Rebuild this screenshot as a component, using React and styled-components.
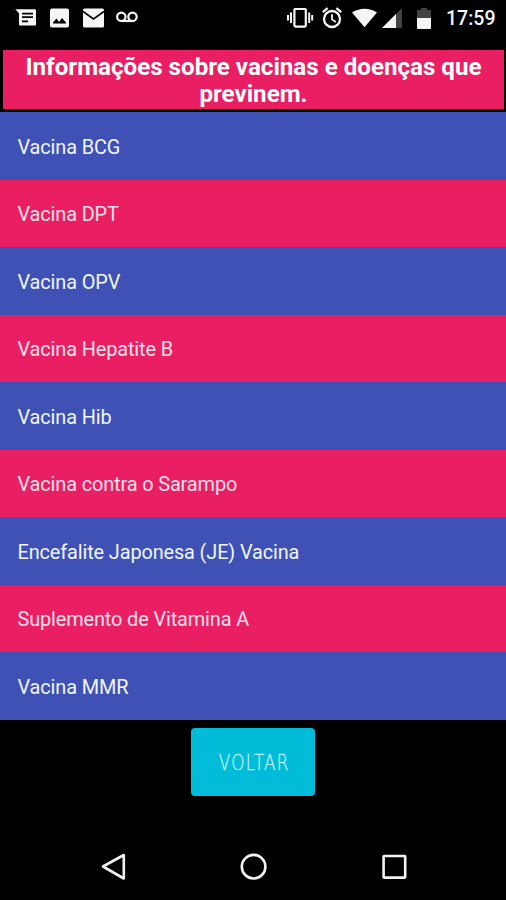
import React from 'react';
import styled, {createGlobalStyle} from 'styled-components';


const GlobalStyle = createGlobalStyle`
    *{
        box-sizing:border-box;
        margin:0;
        padding:0;
    }
    body{
        background-color:#000;
        font-family:Roboto, sans-serif;
    }
`

const Screen = styled.div`
    display:flex;
    flex-direction:column;
    width:506px;
    height:900px;
    background-color:#000;
    color:#fff;
    overflow:hidden;
`

//status bar

const StatusBar = styled.header`
    display:flex;
    justify-content:space-between;
    align-items:center;
    height:36px;
    padding:0 10px 0 15px;
    margin-bottom:14px;
    flex:none;
`

const StatusGroup = styled.div`
    display:flex;
    align-items:center;
`

const Icon = styled.svg`
    display:block;
    flex:none;
    fill:#f5f5f5;
    margin-left:${({$left}) => $left || '0'};
`

const Clock = styled.span`
    width:50px;
    margin-left:15px;
    padding-top:2px;
    font-size:19.5px;
    line-height:34px;
    font-weight:500;
    color:#f5f5f5;
    white-space:nowrap;
`

//content

const Title = styled.h1`
    margin:0 2px 3px 3px;
    height:59px;
    padding:4px 0 0;
    background-color:#e91e63;
    font-size:24.15px;
    line-height:27px;
    font-weight:700;
    text-align:center;
    flex:none;
`

const List = styled.ul`
    display:grid;
    grid-auto-rows:67.5px;
    list-style:none;
    flex:none;
`

const Item = styled.li`
    display:flex;
    align-items:center;
    padding:2.5px 17.5px 0;
    background-color:#3f51b5;
    color:#f0f6ff;
    font-size:19.9px;
    letter-spacing:-0.12px;

    &:nth-child(even){
        background-color:#e91e63;
        color:#fde0ea;
    }
`

const BackButton = styled.button`
    align-self:center;
    width:124px;
    height:68px;
    margin-top:8.5px;
    padding-top:2px;
    border:none;
    border-radius:4px;
    background-color:#00bcd9;
    color:#c5f3f8;
    font-family:'DejaVu Sans Light', 'DejaVu Sans', sans-serif;
    font-weight:200;
    font-size:21px;
    flex:none;
`

const ButtonText = styled.span`
    display:inline-block;
    letter-spacing:1.5px;
    margin-right:-1.5px;
    transform:scaleX(0.8);
    -webkit-text-stroke:0.3px #c5f3f8;
`

const NavBar = styled.nav`
    display:flex;
    justify-content:space-between;
    align-items:center;
    height:67px;
    margin-top:auto;
    padding:0 99px 0 101px;
    flex:none;
`

const NavIcon = styled.svg`
    display:block;
    fill:none;
    stroke:#f2f2f2;
    stroke-width:2.6;
    stroke-linejoin:round;
`

const vaccines = [
    'Vacina BCG',
    'Vacina DPT',
    'Vacina OPV',
    'Vacina Hepatite B',
    'Vacina Hib',
    'Vacina contra o Sarampo',
    'Encefalite Japonesa (JE) Vacina',
    'Suplemento de Vitamina A',
    'Vacina MMR'
]

const Notifications = () => {
    return (
        <StatusGroup>
            <Icon width="21" height="20" viewBox="0 0 21 20">
                <path d="M0.3 1.2H20q1 0 1 1V16.5q0 1-1 1H5q-1 0-1-1V5.2Z" />
                <path d="M7 5.6h11M7 9.2h11M7 13.4h6" stroke="#000" strokeWidth="1.7" />
            </Icon>
            <Icon $left="14px" width="19" height="20" viewBox="0 0 19 20">
                <rect y="0.5" width="19" height="19" rx="2" />
                <path d="M3 15.5V14.5L6.5 10.5 9 14 12 10 16 14.5V15.5Z" fill="#000" />
            </Icon>
            <Icon $left="14px" width="21" height="20" viewBox="0 0 21 20">
                <rect y="0.5" width="21" height="19" rx="1.5" />
                <path d="M0 3.5 10.5 11 21 3.5" fill="none" stroke="#000" strokeWidth="1.6" />
            </Icon>
            <Icon $left="12px" width="22" height="14" viewBox="0 0 22 14">
                <g fill="none" stroke="#f5f5f5" strokeWidth="2.2">
                    <circle cx="5.3" cy="5.8" r="4.2" />
                    <circle cx="16.5" cy="5.8" r="4.2" />
                    <path d="M5.3 10H16.5" />
                </g>
            </Icon>
        </StatusGroup>
    )
}

const SystemIcons = () => {
    return (
        <StatusGroup>
            <Icon width="27" height="20" viewBox="0 0 27 20">
                <rect x="7.4" y="1" width="11.4" height="17.6" rx="1" fill="none" stroke="#f5f5f5" strokeWidth="2.2" />
                <path d="M1 7v5.6M4 4.5v10.5M22.2 4.5v10.5M25.2 7v5.6" stroke="#f5f5f5" strokeWidth="2" />
            </Icon>
            <Icon $left="8px" width="20" height="22" viewBox="0 0 20 22">
                <g fill="none" stroke="#f5f5f5" strokeWidth="2.3">
                    <circle cx="10" cy="12" r="8" />
                    <path d="M0.8 5.2 5.6 1.2M19.2 5.2 14.4 1.2" />
                    <path d="M10 7.2v5.2l3.8 2.6" strokeWidth="1.8" />
                </g>
            </Icon>
            <Icon $left="10px" width="25" height="20" viewBox="0 0 25 20">
                <path d="M0 4.5Q12.5-3 25 4.5L12.5 19.2Z" />
            </Icon>
            <Icon $left="5px" width="20" height="20" viewBox="0 0 20 20">
                <path d="M20 0V20H0Z" fill="#444" />
                <path d="M14 6V20H0Z" />
            </Icon>
            <Icon $left="15px" width="14" height="21" viewBox="0 0 14 21">
                <path d="M4 0h6v2h4v9H0V2h4Z" fill="#444" />
                <path d="M0 10h14v10q0 1-1 1H1q-1 0-1-1Z" />
            </Icon>
            <Clock>17:59</Clock>
        </StatusGroup>
    )
}

const App = () => {
    return (
        <>
            <GlobalStyle />
            <Screen>
                <StatusBar>
                    <Notifications />
                    <SystemIcons />
                </StatusBar>
                <Title>Informações sobre vacinas e doenças que previnem.</Title>
                <List>
                    {vaccines.map((name) => (
                        <Item key={name}>{name}</Item>
                    ))}
                </List>
                <BackButton><ButtonText>VOLTAR</ButtonText></BackButton>
                <NavBar>
                    <NavIcon width="25" height="28" viewBox="0 0 25 28">
                        <path d="M22.8 2V25.5L2 13.5Z" />
                    </NavIcon>
                    <NavIcon width="28" height="28" viewBox="0 0 28 28">
                        <circle cx="13.6" cy="13.7" r="11.8" />
                    </NavIcon>
                    <NavIcon width="26" height="28" viewBox="0 0 26 28">
                        <rect x="2.6" y="3" width="21.6" height="21.6" rx="0.5" />
                    </NavIcon>
                </NavBar>
            </Screen>
        </>
    )
}

export default App;
